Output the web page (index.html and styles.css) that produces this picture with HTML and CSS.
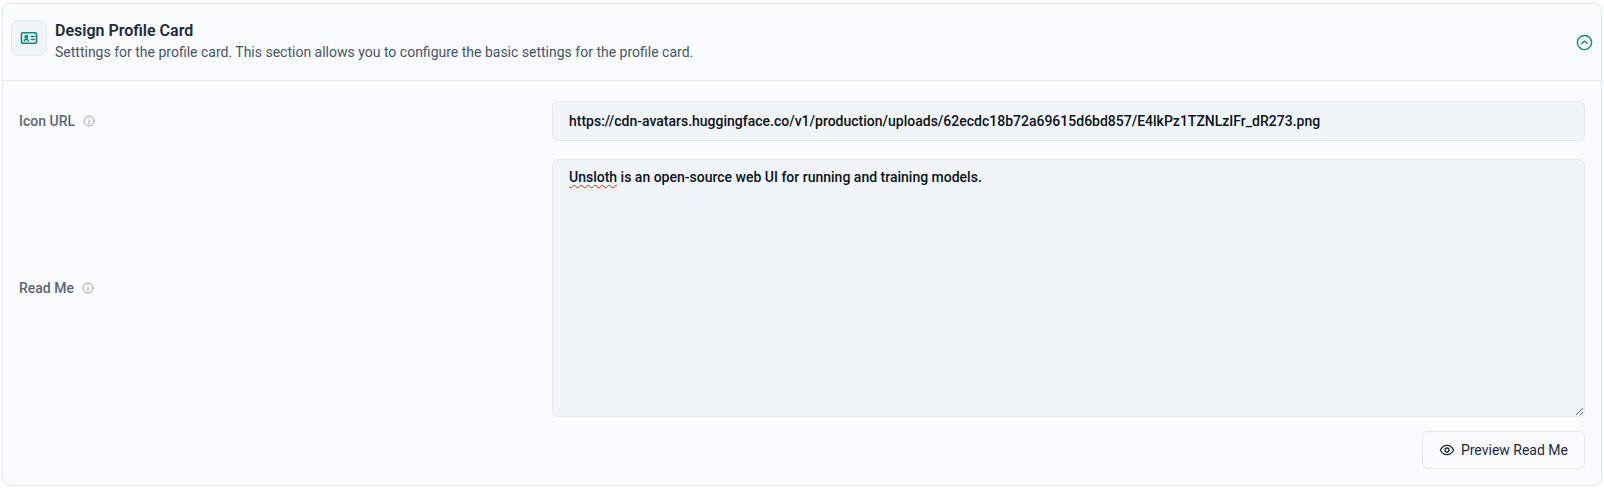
FILE: index.html
```html
<!DOCTYPE html>
<html lang="en">
<head>
    <meta charset="UTF-8">
    <meta name="viewport" content="width=device-width, initial-scale=1.0">
    <title>Design Profile Card</title>
    <link rel="stylesheet" href="styles.css">
</head>
<body>

    <section class="card">
        <header class="card-header">
            <div class="header-icon">
                <svg width="18" height="18" viewBox="0 0 24 24" fill="none" stroke="#0f8a78" stroke-width="2.2" stroke-linecap="round" stroke-linejoin="round">
                    <rect x="2" y="5" width="20" height="14" rx="2"/>
                    <circle cx="8.500" cy="10.500" r="1.600"/>
                    <path d="M5.800 16c.4-1.500 1.400-2.300 2.700-2.300s2.300.8 2.700 2.300"/>
                    <path d="M15 10h4M15 14h4"/>
                </svg>
            </div>
            <div class="header-text">
                <h2>Design Profile Card</h2>
                <p>Setttings for the profile card. This section allows you to configure the basic settings for the profile card.</p>
            </div>
            <svg class="collapse-icon" width="17" height="17" viewBox="0 0 24 24" fill="none" stroke="#0f8a78" stroke-width="2" stroke-linecap="round" stroke-linejoin="round">
                <circle cx="12" cy="12" r="10"/>
                <path d="M8 13.500l4-3.500 4 3.500"/>
            </svg>
        </header>

        <div class="card-body">
            <div class="form-row">
                <label class="form-label">Icon URL
                    <svg class="info-icon" width="12" height="12" viewBox="0 0 24 24" fill="none" stroke="#9ca3af" stroke-width="2" stroke-linecap="round">
                        <circle cx="12" cy="12" r="10"/>
                        <path d="M12 11v6M12 7.500v.1"/>
                    </svg>
                </label>
                <div class="field">https://cdn-avatars.huggingface.co/v1/production/uploads/62ecdc18b72a69615d6bd857/E4lkPz1TZNLzIFr_dR273.png</div>
            </div>

            <div class="form-row">
                <label class="form-label">Read Me
                    <svg class="info-icon" width="12" height="12" viewBox="0 0 24 24" fill="none" stroke="#9ca3af" stroke-width="2" stroke-linecap="round">
                        <circle cx="12" cy="12" r="10"/>
                        <path d="M12 11v6M12 7.500v.1"/>
                    </svg>
                </label>
                <div class="field field-area"><span class="misspelled">Unsloth</span> is an open-source web UI for running and training models.</div>
            </div>

            <div class="actions">
                <button class="btn">
                    <svg width="16" height="16" viewBox="0 0 24 24" fill="none" stroke="#1f2937" stroke-width="2" stroke-linecap="round" stroke-linejoin="round">
                        <path d="M2 12s3.600-7 10-7 10 7 10 7-3.600 7-10 7-10-7-10-7z"/>
                        <circle cx="12" cy="12" r="3"/>
                    </svg>
                    Preview Read Me
                </button>
            </div>
        </div>
    </section>

</body>
</html>
```

FILE: styles.css
```css
body {
    margin: 0;
    padding: 3px 2px;
    background-color: #fff;
    font-family: Roboto, "Liberation Sans", sans-serif;
    color: #1f2937;
}
.card {
    background-color: #fafbfe;
    border: 1px solid #e2e8f0;
    border-radius: 8px;
    height: 483px;
    box-sizing: border-box;
}
.card-header {
    display: flex;
    align-items: center;
    height: 76px;
    padding: 0 8px;
    border-bottom: 1px solid #e2e8f0;
}
.header-icon {
    width: 36px;
    height: 36px;
    box-sizing: border-box;
    display: flex;
    align-items: center;
    justify-content: center;
    background-color: #f1f5f9;
    border: 1px solid #e2e8f0;
    border-radius: 8px;
    margin-right: 8px;
    margin-top: -8px;
}
.header-text {
    flex: 1;
    margin-top: -3px;
}
.header-text h2 {
    margin: 0;
    font-size: 16px;
    line-height: 22px;
    font-weight: 600;
    color: #1e293b;
}
.header-text p {
    margin: 0;
    font-size: 14px;
    line-height: 20px;
    color: #475569;
}
.card-body {
    padding: 20px 16px 0;
}
.form-row {
    display: flex;
    align-items: center;
    margin-bottom: 18px;
}
.form-label {
    width: 533px;
    flex-shrink: 0;
    font-size: 14px;
    font-weight: 500;
    color: #5f6672;
    display: flex;
    align-items: center;
    gap: 8px;
}
.field {
    flex: 1;
    box-sizing: border-box;
    height: 40px;
    padding: 0 16px;
    display: flex;
    align-items: center;
    background-color: #f1f4f9;
    border: 1px solid #e2e8f0;
    border-radius: 6px;
    font-size: 14px;
    font-weight: 500;
    color: #0b1220;
}
.field-area {
    display: block;
    height: 258px;
    padding: 7px 16px;
    line-height: 20px;
    overflow: auto;
    resize: vertical;
}
.misspelled {
    text-decoration: underline wavy #ff1a1a 1px;
    text-underline-offset: 2px;
}
.actions {
    display: flex;
    justify-content: flex-end;
    margin-top: -4px;
}
.btn {
    display: flex;
    align-items: center;
    gap: 6px;
    height: 38px;
    padding: 0 16px;
    background-color: #fafbfe;
    border: 1px solid #e2e8f0;
    border-radius: 6px;
    font-family: inherit;
    font-size: 14px;
    color: #1e293b;
    cursor: pointer;
}
```
